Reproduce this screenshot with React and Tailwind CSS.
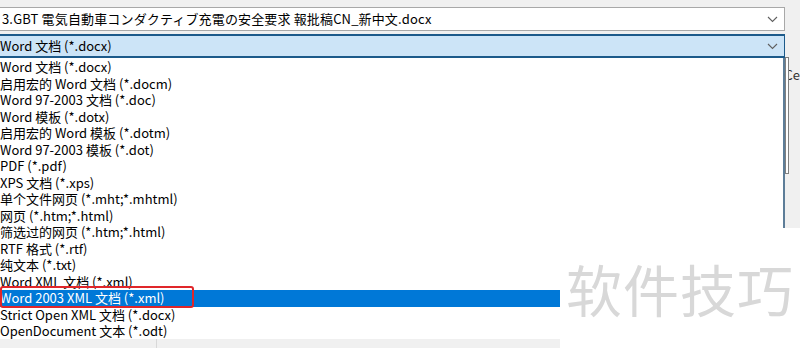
import React from "react";

const items = [
  "Word 文档 (*.docx)",
  "启用宏的 Word 文档 (*.docm)",
  "Word 97-2003 文档 (*.doc)",
  "Word 模板 (*.dotx)",
  "启用宏的 Word 模板 (*.dotm)",
  "Word 97-2003 模板 (*.dot)",
  "PDF (*.pdf)",
  "XPS 文档 (*.xps)",
  "单个文件网页 (*.mht;*.mhtml)",
  "网页 (*.htm;*.html)",
  "筛选过的网页 (*.htm;*.html)",
  "RTF 格式 (*.rtf)",
  "纯文本 (*.txt)",
  "Word XML 文档 (*.xml)",
  "Word 2003 XML 文档 (*.xml)",
  "Strict Open XML 文档 (*.docx)",
  "OpenDocument 文本 (*.odt)",
];

function Chevron() {
  return (
    <svg width="11" height="7" viewBox="0 0 11 7" className="shrink-0">
      <path d="M1 1 L5.5 5.5 L10 1" fill="none" stroke="#606060" strokeWidth="1.1" />
    </svg>
  );
}

export default function App() {
  const font = { fontFamily: '"Noto Sans CJK SC", "Noto Sans", sans-serif' };
  return (
    <div
      className="relative w-[800px] h-[348px] overflow-hidden bg-[#f0f0f0] text-[13px] text-black"
      style={font}
    >
      <div className="flex">
        <div className="w-[787px] flex flex-col">
          <div className="h-[7px]" />
          <div className="h-[24px] bg-white border border-l-0 border-[#a8a8a8] flex items-center justify-between pl-[2px] pr-[6px]">
            <span className="leading-[16px] tracking-[0.15px]">3.GBT 電気自動車コンダクティブ充電の安全要求 報批稿CN_新中文.docx</span>
            <Chevron />
          </div>
          <div className="h-[3px]" />
          <div className="h-[24px] bg-[#cce4f7] border-y-2 border-r border-[#1c5a8a] flex items-center justify-between pl-0 pr-[6px]">
            <span className="leading-[16px]">Word 文档 (*.docx)</span>
            <Chevron />
          </div>
          <div className="bg-white border-r-2 border-b-2 border-[#5d7d98] pt-[1px]">
            {items.map((t, i) => (
              <div
                key={t}
                className={
                  "h-[16.5px] leading-[16.5px] whitespace-nowrap " +
                  (i === 14 ? "bg-[#0078d7] text-white" : "")
                }
              >
                {t}
              </div>
            ))}
          </div>
        </div>
        <div className="flex-1 relative">
          <div className="mt-[68px] text-[13px] text-[#333] leading-[14px]">Ce</div>
          <div className="absolute left-0 top-[57px] w-[4px] h-[117px] bg-white border border-[#808080]" />
        </div>
      </div>

      <div className="absolute left-0 top-[339px] w-[560px] h-[9px] bg-[#f0f0f0]">
        <div className="absolute left-[156px] top-0 w-px h-full bg-[#d8d8d8]" />
      </div>

      <div className="absolute left-0 top-[286px] w-[194px] h-[22px] border-2 border-[#e0262a] rounded-[3px]" />

      <div className="absolute left-[560px] top-[228px] w-[240px] h-[120px] bg-white flex items-center pl-[6px]">
        <span className="text-[56px] leading-[60px] text-[#d8d8d8] tracking-[1px]" style={font}>
          软件技巧
        </span>
      </div>
    </div>
  );
}
